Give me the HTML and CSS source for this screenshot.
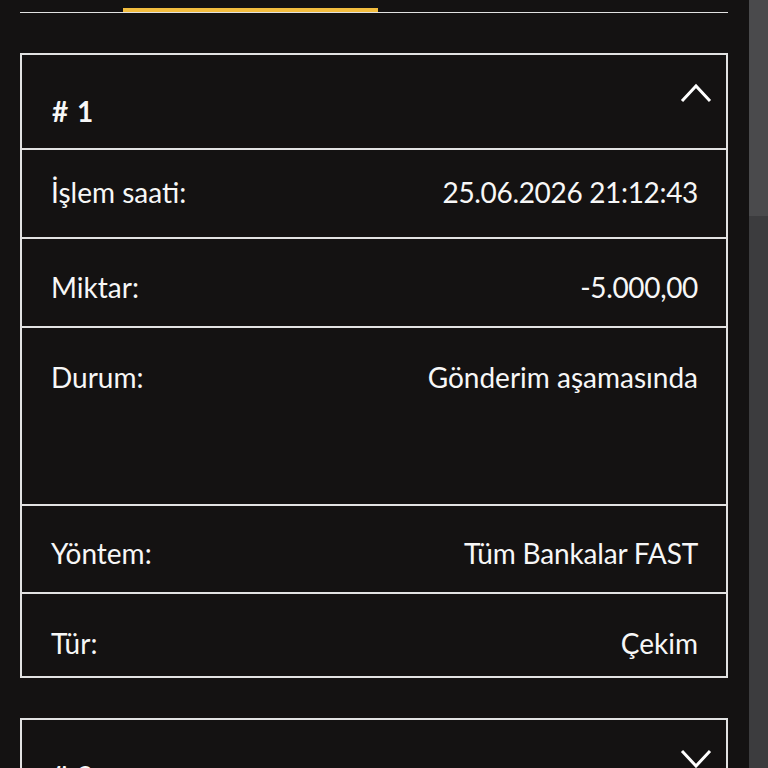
FILE: index.html
```html
<!DOCTYPE html>
<html lang="tr">
<head>
<meta charset="utf-8">
<title>İşlemler</title>
<link rel="stylesheet" href="styles.css">
</head>
<body>
<div class="screen">
  <main class="page">
    <nav class="tabs">
      <span class="tab-spacer"></span>
      <span class="tab-indicator"></span>
    </nav>

    <section class="card">
      <header class="card-head">
        <span class="card-title"># 1</span>
        <svg class="chevron" width="32" height="22" viewBox="0 0 32 22" aria-hidden="true">
          <polyline points="2,19 16,4 30,19" fill="none" stroke="#ffffff" stroke-width="3" stroke-linejoin="miter"/>
        </svg>
      </header>
      <div class="row row-first">
        <span class="label">İşlem saati:</span>
        <span class="value num">25.06.2026 21:12:43</span>
      </div>
      <div class="row">
        <span class="label">Miktar:</span>
        <span class="value num">-5.000,00</span>
      </div>
      <div class="row row-tall">
        <span class="label">Durum:</span>
        <span class="value">Gönderim aşamasında</span>
      </div>
      <div class="row row-method">
        <span class="label">Yöntem:</span>
        <span class="value tight">Tüm Bankalar FAST</span>
      </div>
      <div class="row row-last">
        <span class="label">Tür:</span>
        <span class="value">Çekim</span>
      </div>
    </section>

    <section class="card">
      <header class="card-head">
        <span class="card-title"># 2</span>
        <svg class="chevron" width="32" height="22" viewBox="0 0 32 22" aria-hidden="true">
          <polyline points="2,4 16,19 30,4" fill="none" stroke="#ffffff" stroke-width="3" stroke-linejoin="miter"/>
        </svg>
      </header>
    </section>
  </main>
  <div class="scrollbar"><div class="scroll-thumb"></div></div>
</div>
</body>
</html>
```

FILE: styles.css
```css
html, body {
  margin: 0;
  padding: 0;
  background: #141212;
}

body {
  font-family: Lato, "Noto Sans", sans-serif;
  color: #f7f7f7;
}

.screen {
  display: flex;
  height: 768px;
  overflow: hidden;
}

.page {
  flex: 1;
  padding: 0 21px 0 20px;
  overflow: hidden;
}

.tabs {
  display: flex;
  align-items: flex-end;
  height: 12px;
  border-bottom: 1px solid #e2e2e2;
}

.tab-spacer {
  width: 103px;
}

.tab-indicator {
  width: 255px;
  height: 4px;
  background: #f2bd3f;
}

.card {
  margin-top: 40px;
  border: 2px solid #e2e2e2;
}

.card-head {
  display: flex;
  justify-content: space-between;
  align-items: flex-start;
  padding: 0 14px 20px 30px;
}

.card-title {
  padding-top: 39px;
  font-size: 28px;
  line-height: 34px;
  font-weight: 700;
  letter-spacing: 1px;
}

.chevron {
  margin-top: 27px;
  display: block;
}

.row {
  display: flex;
  justify-content: space-between;
  align-items: flex-start;
  border-top: 2px solid #e2e2e2;
  padding: 31px 28px 22px 29px;
  font-size: 28px;
  line-height: 34px;
}

.num {
  letter-spacing: -0.33px;
}

.tight {
  letter-spacing: -0.18px;
}

.row-first {
  padding-top: 25px;
  padding-bottom: 28px;
}

.row-tall {
  padding-top: 32px;
  padding-bottom: 110px;
}

.row-method {
  padding-top: 30px;
}

.row-last {
  padding-top: 32px;
  padding-bottom: 16px;
}

.scrollbar {
  width: 19px;
  background: #3c3c3e;
}

.scroll-thumb {
  height: 216px;
  background: #4a4a4c;
}
```
